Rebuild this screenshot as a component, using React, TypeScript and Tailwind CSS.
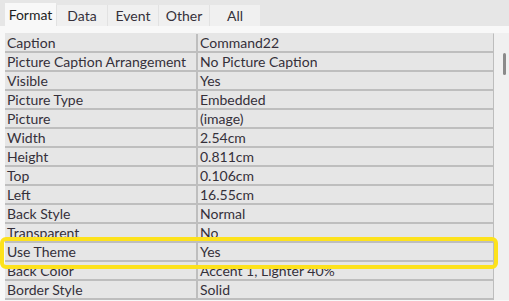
import type { ReactElement } from "react";

const TABS = ["Format", "Data", "Event", "Other", "All"];

const ROWS: readonly [string, string][] = [
  ["Caption", "Command22"],
  ["Picture Caption Arrangement", "No Picture Caption"],
  ["Visible", "Yes"],
  ["Picture Type", "Embedded"],
  ["Picture", "(image)"],
  ["Width", "2.54cm"],
  ["Height", "0.811cm"],
  ["Top", "0.106cm"],
  ["Left", "16.55cm"],
  ["Back Style", "Normal"],
  ["Transparent", "No"],
  ["Use Theme", "Yes"],
  ["Back Color", "Accent 1, Lighter 40%"],
  ["Border Style", "Solid"],
];

export default function App(): ReactElement {
  return (
    <div
      className="relative h-[301px] w-[509px] overflow-hidden bg-[#f8f8f8] text-[14px] text-[#35303a]"
      style={{ fontFamily: '"Segoe UI", Lato, sans-serif' }}
    >
      <div className="flex h-[26px] items-end bg-[#e6e6e6] pl-[5px]">
        {TABS.map((tab, i) => (
          <div
            key={tab}
            className={
              i === 0
                ? "flex h-[23px] w-[51px] items-center justify-center bg-[#f8f8f8] text-[#1e1e1e]"
                : "flex h-[21px] w-[51px] items-center justify-center border-l border-[#e2e2e2] bg-[#f0f0f0]"
            }
          >
            {tab}
          </div>
        ))}
      </div>
      <div className="h-[7px]" />
      <div className="flex">
        <div className="ml-[5px] w-[489px] border-r border-[#bdbdbd] border-t border-t-[#e6e6e6]">
          {ROWS.map(([name, value]) => (
            <div
              key={name}
              className="flex h-[19px] border-b-2 border-[#bebebe] bg-[#e6e6e6] leading-[17px]"
            >
              <div className="w-[193px] shrink-0 truncate border-r-2 border-[#bebebe] pl-[2px]">
                {name}
              </div>
              <div className="truncate pl-[2px]">{value}</div>
            </div>
          ))}
        </div>
        <div className="relative flex-1 bg-[#f0f0f0]">
          <div className="absolute left-[9px] top-[20px] h-[22px] w-[3px] rounded-full bg-[#8a8a8a]" />
        </div>
      </div>
      <div className="pointer-events-none absolute left-[0px] top-[237px] h-[32px] w-[498px] rounded-[6px] border-4 border-[#fde21c]" />
    </div>
  );
}
